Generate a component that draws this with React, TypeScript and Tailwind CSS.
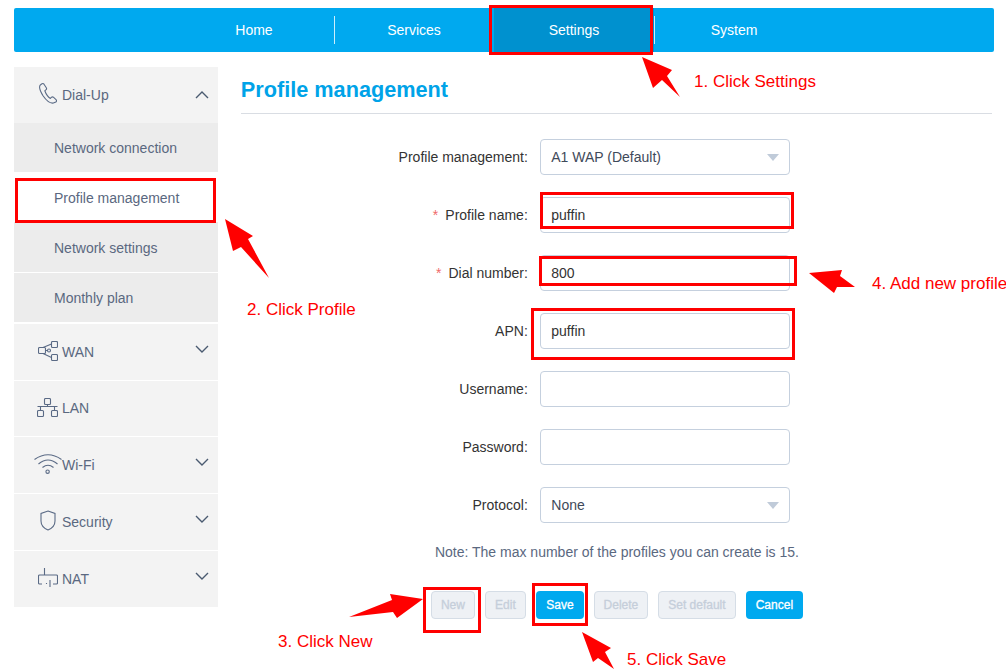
import React from 'react';

const font = "font-['Liberation_Sans',Arial,sans-serif]";

const Chevron = ({ up = false }: { up?: boolean }) => (
  <svg width="14" height="8" viewBox="0 0 14 8" fill="none" stroke="#4a5a70" strokeWidth="1.4" className={up ? 'ml-auto mr-[9px]' : 'ml-auto mr-[9px] mb-[6px]'}>
    <path d={up ? 'M1 7 L7 1 L13 7' : 'M1 1 L7 7 L13 1'} />
  </svg>
);

const PhoneIcon = () => (
  <svg width="18" height="21" viewBox="0 0 18 21" fill="none" stroke="#5a6a85" strokeWidth="1.1">
    <path d="M2.6 1 L1.2 2.2 C0 3.8 1.4 8.6 4.2 13 C7 17 11.2 20.6 14.4 20 L16.8 19 C17.8 18.2 17.6 17.2 17 16.6 L14.4 14.2 C13.7 13.7 12.9 13.9 12.3 14.4 L11.4 15.4 C9.5 14.4 6.8 10.5 5.8 7.8 L7.1 6.7 C7.7 6.1 7.7 5.3 7.3 4.7 L5 1.2 C4.4 0.4 3.4 0.4 2.6 1 Z" />
  </svg>
);

const WanIcon = () => (
  <svg width="20" height="20" viewBox="0 0 20 20" fill="none" stroke="#5a6a85" strokeWidth="1.1">
    <rect x="0.5" y="6.5" width="7" height="6" rx="1" />
    <rect x="13.5" y="0.5" width="6" height="6" rx="1" />
    <rect x="13.5" y="13.5" width="6" height="6" rx="1" />
    <circle cx="11" cy="9.5" r="1.5" />
    <path d="M5 6.5 L13.5 3 M5 12.5 L13.5 16.5 M7.5 9.5 H9.5" />
  </svg>
);

const LanIcon = () => (
  <svg width="21" height="19" viewBox="0 0 21 19" fill="none" stroke="#5a6a85" strokeWidth="1.1">
    <rect x="7.5" y="0.5" width="6" height="6" rx="1" />
    <rect x="0.5" y="12.5" width="6" height="6" rx="1" />
    <rect x="14.5" y="12.5" width="6" height="6" rx="1" />
    <path d="M10.5 6.5 V8.5 M0.5 8.5 H20.5 M3.5 8.5 V12.5 M17.5 8.5 V12.5" />
  </svg>
);

const WifiIcon = () => (
  <svg width="28" height="21" viewBox="0 0 28 21" fill="none" stroke="#5a6a85" strokeWidth="1.1">
    <path d="M0.5 6.5 Q14 -3 27.5 6.5" />
    <path d="M4.5 11 Q14 3 23.5 11" />
    <path d="M8.5 14.5 Q14 10 19.5 14.5" />
    <circle cx="13.6" cy="18.7" r="1.7" />
  </svg>
);

const ShieldIcon = () => (
  <svg width="16" height="21" viewBox="0 0 16 21" fill="none" stroke="#5a6a85" strokeWidth="1.1">
    <path d="M8 1 L15 3.5 V11 C15 15 11.5 18.5 8 20 C4.5 18.5 1 15 1 11 V3.5 Z" />
  </svg>
);

const NatIcon = () => (
  <svg width="20" height="20" viewBox="0 0 20 20" fill="none" stroke="#5a6a85" strokeWidth="1.1">
    <path d="M6.5 0 V7 M1.5 7 H18.5 Q19.5 7 19.5 8 V15 Q19.5 16 18.5 16 H15 M1.5 7 Q0.5 7 0.5 8 V15 Q0.5 16 1.5 16 H4 M12 12 V19 M8.5 15 V16" />
  </svg>
);

const menu = [
  { label: 'WAN', icon: <WanIcon />, arrow: true, h: 'h-[56px]' },
  { label: 'LAN', icon: <LanIcon />, arrow: false, h: 'h-[55px]' },
  { label: 'Wi-Fi', icon: <WifiIcon />, arrow: true, h: 'h-[56px]' },
  { label: 'Security', icon: <ShieldIcon />, arrow: true, h: 'h-[56px]' },
  { label: 'NAT', icon: <NatIcon />, arrow: true, h: 'h-[56px]' },
];

const fields = [
  { label: 'Profile management:', value: 'A1 WAP (Default)', select: true },
  { label: 'Profile name:', value: 'puffin', required: 'mr-[7px]' },
  { label: 'Dial number:', value: '800', required: 'mr-[7px]' },
  { label: 'APN:', value: 'puffin' },
  { label: 'Username:', value: '' },
  { label: 'Password:', value: '' },
  { label: 'Protocol:', value: 'None', select: true },
];

const buttons = [
  { label: 'New', w: 'w-[44px]' },
  { label: 'Edit', w: 'w-[41px]' },
  { label: 'Save', w: 'w-[48px]', on: true },
  { label: 'Delete', w: 'w-[54px]' },
  { label: 'Set default', w: 'w-[78px]' },
  { label: 'Cancel', w: 'w-[57px]', on: true },
];

const Icon = ({ children }: { children: React.ReactNode }) => (
  <span className="ml-[19px] mb-[3px] flex w-[29px] shrink-0 items-center justify-center">{children}</span>
);

export default function App() {
  return (
    <div className={`${font} relative h-[671px] w-[1006px] overflow-hidden bg-white px-[14px] pt-2 text-[14px]`}>
      {/* top nav */}
      <div className="flex h-[44px] w-[980px] rounded-[2px] bg-[#00a9ef] pl-[160px] text-white">
        {['Home', 'Services', 'Settings', 'System'].map((item) => (
          <div key={item} className={`flex w-[160px] ${item === 'Settings' ? 'bg-[#0091cf]' : ''}`}>
            <span className="flex h-full flex-1 items-center justify-center">{item}</span>
            {(item === 'Home' || item === 'Settings') && <span className="mt-[8px] -mr-px h-[28px] w-px bg-white/80" />}
          </div>
        ))}
      </div>

      <div className="mt-[15px] flex gap-[23px]">
        {/* sidebar */}
        <div className="w-[204px] text-[#5a6880]">
          <div className="flex h-[56px] items-center bg-[#f3f3f3]">
            <Icon><PhoneIcon /></Icon>
            <span>Dial-Up</span>
            <Chevron up />
          </div>
          <div className="flex h-[49px] items-center bg-[#ececec] pl-[40px] pt-[2px]">Network connection</div>
          <div className="flex h-[50px] items-center bg-white pl-[40px] pt-[2px]">Profile management</div>
          <div className="flex h-[50px] items-center bg-[#ececec] pl-[40px] pt-[2px]">Network settings</div>
          <div className="mt-px flex h-[49px] items-center bg-[#ececec] pl-[40px] pt-[2px]">Monthly plan</div>
          <div className="mt-[2px] flex flex-col gap-px">
            {menu.map((m) => (
              <div key={m.label} className={`flex items-center bg-[#f3f3f3] ${m.h}`}>
                <Icon>{m.icon}</Icon>
                <span>{m.label}</span>
                {m.arrow && <Chevron />}
              </div>
            ))}
          </div>
        </div>

        {/* main */}
        <div className="w-[752px]">
          <div className="h-[47px] border-b border-[#d9dde3] pt-[9px] text-[21.7px] leading-[28px] font-bold text-[#00a3e8]">Profile management</div>
          <div className="mt-[25px] flex flex-col gap-[22px]">
            {fields.map((f) => (
              <div key={f.label} className="flex items-center gap-[12px]">
                <div className="w-[287px] text-right text-[#333]">
                  {f.required && <span className={`text-[#f06a6a] ${f.required}`}>*</span>}
                  {f.label}
                </div>
                {f.select ? (
                  <div className="flex h-[36px] w-[250px] items-center justify-between rounded-[4px] border border-[#c5d0de] pl-[10.5px] pr-[10px] text-[#3f4a5a]">
                    {f.value}
                    <span className="h-0 w-0 border-x-[6px] border-t-[7px] border-x-transparent border-t-[#c0cbd9]" />
                  </div>
                ) : (
                  <input readOnly value={f.value} className="h-[36px] w-[250px] rounded-[4px] border border-[#c5d0de] pl-[10.5px] text-[#333] outline-none" />
                )}
              </div>
            ))}
          </div>
          <div className="ml-[1px] mt-[19px] text-center leading-[20px] text-[#5a6880]">Note: The max number of the profiles you can create is 15.</div>
          <div className="ml-[1px] mt-[29px] flex justify-center gap-[10px] text-[12px] [-webkit-text-stroke:0.3px]">
            {buttons.map((b) => (
              <div
                key={b.label}
                className={`flex h-[28px] items-center justify-center rounded-[4px] ${b.w} ${b.on ? 'bg-[#00a9ef] text-white' : 'border border-[#d5dde6] bg-[#eef1f5] text-[#c5ceda]'}`}
              >
                {b.label}
              </div>
            ))}
          </div>
        </div>
      </div>

      {/* tutorial annotations */}
      <div className="absolute left-[489px] top-[5px] h-[50px] w-[164px] border-[3px] border-[#ff0000]" />
      <div className="absolute left-[15px] top-[178px] h-[45px] w-[201px] border-[3px] border-[#ff0000]" />
      <div className="absolute left-[540px] top-[192px] h-[37px] w-[254px] border-[3px] border-[#ff0000]" />
      <div className="absolute left-[539px] top-[256px] h-[30px] w-[258px] border-[3px] border-[#ff0000]" />
      <div className="absolute left-[531px] top-[308px] h-[52px] w-[264px] border-[3px] border-[#ff0000]" />
      <div className="absolute left-[423px] top-[587px] h-[46px] w-[58px] border-[3px] border-[#ff0000]" />
      <div className="absolute left-[532px] top-[583px] h-[43px] w-[56px] border-[3px] border-[#ff0000]" />

      <svg className="absolute left-0 top-0" width="1006" height="671" fill="#ff0000">
        <polygon points="642,57 672,70 667,76 680,97 662,80 653,88" />
        <polygon points="225,219 253,236 248,239 269,278 241,247 233,251" />
        <polygon points="423,599 397,618 393,612 349,617 392,600 390,594" />
        <polygon points="809,273 842,270 840,276 855,287 837,287 834,293" />
        <polygon points="582,632 611,648 605,652 614,669 598,658 593,662" />
      </svg>

      <span className="absolute left-[694px] top-[73px] text-[17px] leading-[18px] text-[#ff0000]">1. Click Settings</span>
      <span className="absolute left-[247px] top-[301px] text-[17px] leading-[18px] text-[#ff0000]">2. Click Profile</span>
      <span className="absolute left-[278px] top-[633px] text-[17px] leading-[18px] text-[#ff0000]">3. Click New</span>
      <span className="absolute left-[872px] top-[275px] text-[17px] leading-[18px] whitespace-nowrap text-[#ff0000]">4. Add new profile</span>
      <span className="absolute left-[627px] top-[651px] text-[17px] leading-[18px] text-[#ff0000]">5. Click Save</span>
    </div>
  );
}
